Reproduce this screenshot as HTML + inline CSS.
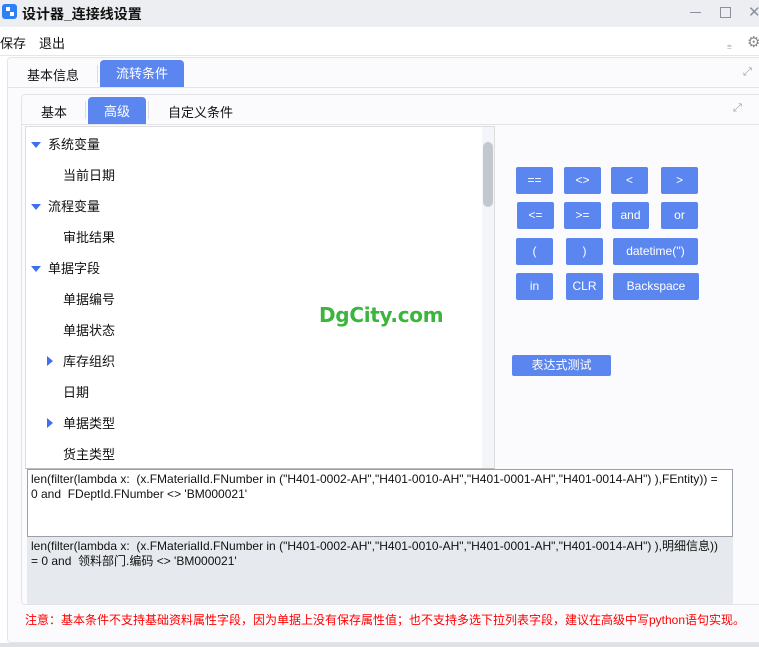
<!DOCTYPE html>
<html><head><meta charset="utf-8">
<style>
*{box-sizing:border-box;margin:0;padding:0}
body{width:759px;height:647px;overflow:hidden;background:#fff;font-family:"Liberation Sans","Noto Sans CJK SC",sans-serif;font-size:13px;color:#111;position:relative}
.abs{position:absolute}
.title{left:0;top:0;width:759px;height:27px;background:#eceef2}
.btn{position:absolute;background:#5b86f0;color:#fff;border-radius:2px;font-size:12px;text-align:center;line-height:27px;height:27px}
.tree div{position:absolute;font-size:13px;white-space:nowrap}
.tri-d{position:absolute;width:0;height:0;border-left:5px solid transparent;border-right:5px solid transparent;border-top:6px solid #3f6ff0}
.tri-r{position:absolute;width:0;height:0;border-top:5px solid transparent;border-bottom:5px solid transparent;border-left:6px solid #3f6ff0}
</style></head><body>
<div class="abs title"></div>
<div class="abs" style="left:2px;top:4px;width:15px;height:15px;background:#2f7ff5;border-radius:3px"></div>
<div class="abs" style="left:6px;top:7px;width:4px;height:4px;background:#fff"></div>
<div class="abs" style="left:10px;top:12px;width:4px;height:4px;background:#fff"></div>
<div class="abs" style="left:22px;top:4px;font-size:14px;font-weight:bold">设计器_连接线设置</div>
<div class="abs" style="left:690px;top:12px;width:11px;height:1px;background:#8a90a0"></div>
<div class="abs" style="left:720px;top:7px;width:11px;height:11px;border:1px solid #8a90a0"></div>
<div class="abs" style="left:748px;top:3px;font-size:15px;color:#8a90a0">✕</div>
<div class="abs" style="left:0;top:33px;font-size:13px">保存</div>
<div class="abs" style="left:39px;top:33px;font-size:13px">退出</div>
<div class="abs" style="left:727px;top:42px;font-size:8px;color:#999">⩧</div>
<div class="abs" style="left:747px;top:33px;font-size:15px;color:#888">⚙</div>
<div class="abs" style="left:0;top:55px;width:759px;height:1px;background:#e4e6ea"></div>
<!-- outer panel -->
<div class="abs" style="left:7px;top:57px;width:760px;height:586px;border:1px solid #e2e4e9;border-radius:4px;background:#fbfbfd"></div>
<div class="abs" style="left:0;top:643px;width:759px;height:4px;background:#e0e1e5"></div>
<div class="abs" style="left:27px;top:65px;font-size:13px">基本信息</div>
<div class="abs" style="left:97px;top:65px;width:1px;height:18px;background:#ddd"></div>
<div class="abs" style="left:100px;top:60px;width:84px;height:27px;background:#5b86f0;border-radius:4px 4px 0 0;color:#fff;text-align:center;line-height:28px;font-size:13px">流转条件</div>
<div class="abs" style="left:8px;top:87px;width:751px;height:1px;background:#e2e4e9"></div>
<div class="abs" style="left:743px;top:66px;font-size:11px;color:#99a">⤢</div>
<!-- inner panel -->
<div class="abs" style="left:21px;top:94px;width:745px;height:511px;border:1px solid #e2e4e9;border-radius:4px;background:#fbfbfd"></div>
<div class="abs" style="left:41px;top:102px">基本</div>
<div class="abs" style="left:85px;top:101px;width:1px;height:18px;background:#ddd"></div>
<div class="abs" style="left:88px;top:97px;width:58px;height:27px;background:#5b86f0;border-radius:4px 4px 0 0;color:#fff;text-align:center;line-height:29px">高级</div>
<div class="abs" style="left:148px;top:101px;width:1px;height:18px;background:#ddd"></div>
<div class="abs" style="left:168px;top:102px">自定义条件</div>
<div class="abs" style="left:22px;top:124px;width:737px;height:1px;background:#e2e4e9"></div>
<div class="abs" style="left:733px;top:102px;font-size:11px;color:#99a">⤢</div>
<!-- tree -->
<div class="abs tree" style="left:25px;top:126px;width:470px;height:343px;background:#fff;border:1px solid #ddd;border-bottom-color:#bbb">
<div class="abs" style="right:0;top:0;width:12px;height:341px;background:#f3f5f9"></div>
<div class="abs" style="right:1px;top:15px;width:10px;height:65px;background:#c3c7ce;border-radius:5px"></div>
<span class="tri-d" style="left:5px;top:15px"></span><div style="left:22px;top:7px">系统变量</div>
<div style="left:37px;top:38px">当前日期</div>
<span class="tri-d" style="left:5px;top:77px"></span><div style="left:22px;top:69px">流程变量</div>
<div style="left:37px;top:100px">审批结果</div>
<span class="tri-d" style="left:5px;top:139px"></span><div style="left:22px;top:131px">单据字段</div>
<div style="left:37px;top:162px">单据编号</div>
<div style="left:37px;top:193px">单据状态</div>
<span class="tri-r" style="left:21px;top:229px"></span><div style="left:37px;top:224px">库存组织</div>
<div style="left:37px;top:255px">日期</div>
<span class="tri-r" style="left:21px;top:291px"></span><div style="left:37px;top:286px">单据类型</div>
<div style="left:37px;top:317px">货主类型</div>
</div>
<div class="abs" style="left:319px;top:303px;font-size:20px;font-weight:bold;color:#3cb53c;font-family:'DejaVu Sans',sans-serif;letter-spacing:-0.3px">DgCity.com</div>
<!-- buttons -->
<div class="btn" style="left:516px;top:167px;width:37px">==</div>
<div class="btn" style="left:564px;top:167px;width:37px">&lt;&gt;</div>
<div class="btn" style="left:611px;top:167px;width:37px">&lt;</div>
<div class="btn" style="left:661px;top:167px;width:37px">&gt;</div>
<div class="btn" style="left:517px;top:202px;width:37px">&lt;=</div>
<div class="btn" style="left:564px;top:202px;width:37px">&gt;=</div>
<div class="btn" style="left:612px;top:202px;width:37px">and</div>
<div class="btn" style="left:661px;top:202px;width:37px">or</div>
<div class="btn" style="left:516px;top:238px;width:37px">(</div>
<div class="btn" style="left:566px;top:238px;width:37px">)</div>
<div class="btn" style="left:613px;top:238px;width:85px">datetime('')</div>
<div class="btn" style="left:516px;top:273px;width:37px">in</div>
<div class="btn" style="left:566px;top:273px;width:37px">CLR</div>
<div class="btn" style="left:613px;top:273px;width:86px">Backspace</div>
<div class="btn" style="left:512px;top:355px;width:99px;height:21px;line-height:21px">表达式测试</div>
<!-- textarea -->
<div class="abs" style="left:27px;top:469px;width:706px;height:68px;background:#fff;border:1px solid #9aa0ab;padding:2px 14px 2px 3px;font-size:12px;line-height:15px">len(filter(lambda x:&nbsp; (x.FMaterialId.FNumber in ("H401-0002-AH","H401-0010-AH","H401-0001-AH","H401-0014-AH") ),FEntity)) =<br>0 and&nbsp; FDeptId.FNumber &lt;&gt; 'BM000021'</div>
<div class="abs" style="left:27px;top:537px;width:706px;height:67px;background:#e6e9ee;padding:2px 4px;font-size:12px;line-height:15px">len(filter(lambda x:&nbsp; (x.FMaterialId.FNumber in ("H401-0002-AH","H401-0010-AH","H401-0001-AH","H401-0014-AH") ),明细信息))<br>= 0 and&nbsp; 领料部门.编码 &lt;&gt; 'BM000021'</div>
<div class="abs" style="left:25px;top:611px;font-size:12px;color:#f00;white-space:nowrap;letter-spacing:0px">注意：基本条件不支持基础资料属性字段，因为单据上没有保存属性值；也不支持多选下拉列表字段，建议在高级中写python语句实现。</div>
</body></html>
